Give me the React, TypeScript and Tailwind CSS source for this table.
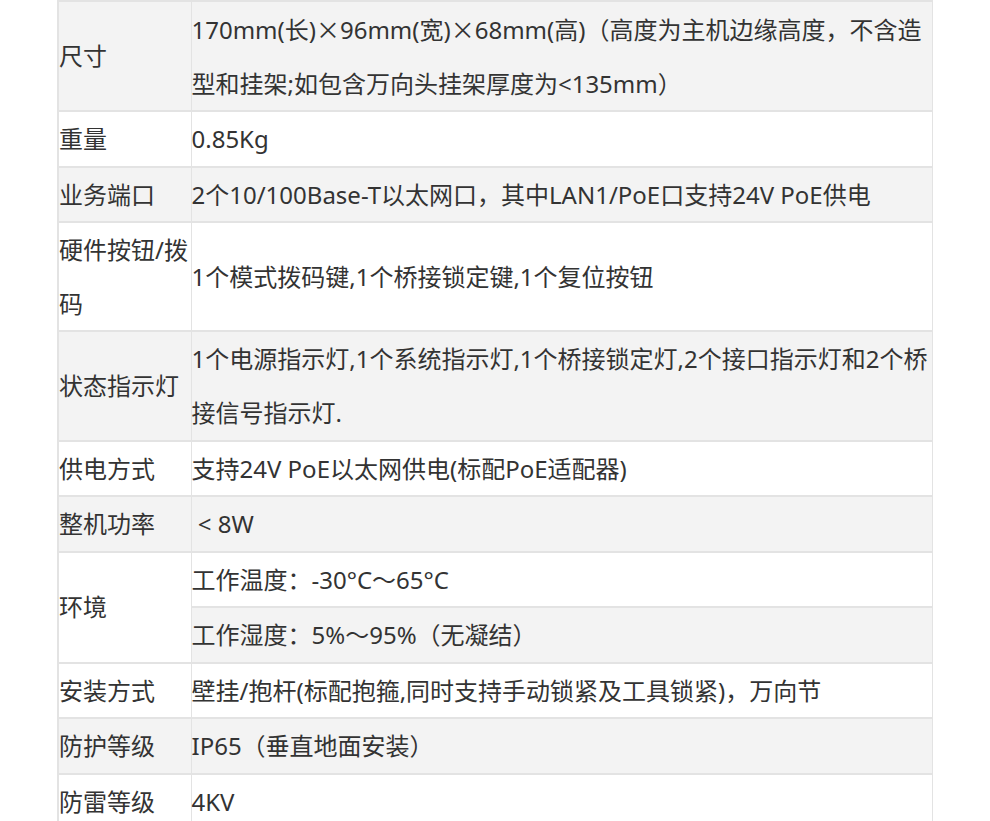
import React from "react";

type Row = { label?: string; value: React.ReactNode; rowSpan?: number; labelHidden?: boolean; labelBg?: string };

const X = () => <span className="font-['Noto_Sans_CJK_SC',sans-serif]">×</span>;

const rows: Row[] = [
  {
    label: "尺寸",
    value: (
      <>
        170mm(长)<X />96mm(宽)<X />68mm(高)（高度为主机边缘高度，不含造型和挂架;如包含万向头挂架厚度为&lt;135mm）
      </>
    ),
  },
  { label: "重量", value: "0.85Kg" },
  { label: "业务端口", value: "2个10/100Base-T以太网口，其中LAN1/PoE口支持24V PoE供电" },
  { label: "硬件按钮/拨码", value: "1个模式拨码键,1个桥接锁定键,1个复位按钮" },
  { label: "状态指示灯", value: "1个电源指示灯,1个系统指示灯,1个桥接锁定灯,2个接口指示灯和2个桥接信号指示灯." },
  { label: "供电方式", value: "支持24V PoE以太网供电(标配PoE适配器)" },
  { label: "整机功率", value: "\u00a0< 8W" },
  { label: "环境", value: "工作温度：-30°C～65°C", rowSpan: 2 },
  { labelHidden: true, value: "工作湿度：5%～95%（无凝结）" },
  { label: "安装方式", value: "壁挂/抱杆(标配抱箍,同时支持手动锁紧及工具锁紧)，万向节" },
  { label: "防护等级", value: "IP65（垂直地面安装）" },
  { label: "防雷等级", value: "4KV" },
];

export default function App() {
  return (
    <div className="w-[990px] h-[821px] overflow-hidden bg-white font-['Noto_Sans','Noto_Sans_CJK_SC',sans-serif]">
      <div className="ml-[57px] w-[876px]">
        <table className="w-full border-collapse table-fixed text-[24px] leading-[53.57px] text-[#333333]">
          <colgroup>
            <col className="w-[133px]" />
            <col />
          </colgroup>
          <tbody>
            {rows.map((r, i) => (
              <tr key={i} className={i % 2 === 0 ? "bg-[#f3f3f3]" : "bg-white"}>
                {!r.labelHidden && (
                  <td
                    rowSpan={r.rowSpan}
                    className={
                      i === 7
                        ? "border-y-2 border-l-2 border-r border-[#e3e3e3] bg-white p-0 align-middle"
                        : "border-y-2 border-l-2 border-r border-[#e3e3e3] p-0 align-middle"
                    }
                  >
                    {r.label}
                  </td>
                )}
                <td className="border-y-2 border-l border-r border-[#e3e3e3] py-0 pl-0 pr-[1px] align-middle">
                  {r.value}
                </td>
              </tr>
            ))}
          </tbody>
        </table>
      </div>
    </div>
  );
}
